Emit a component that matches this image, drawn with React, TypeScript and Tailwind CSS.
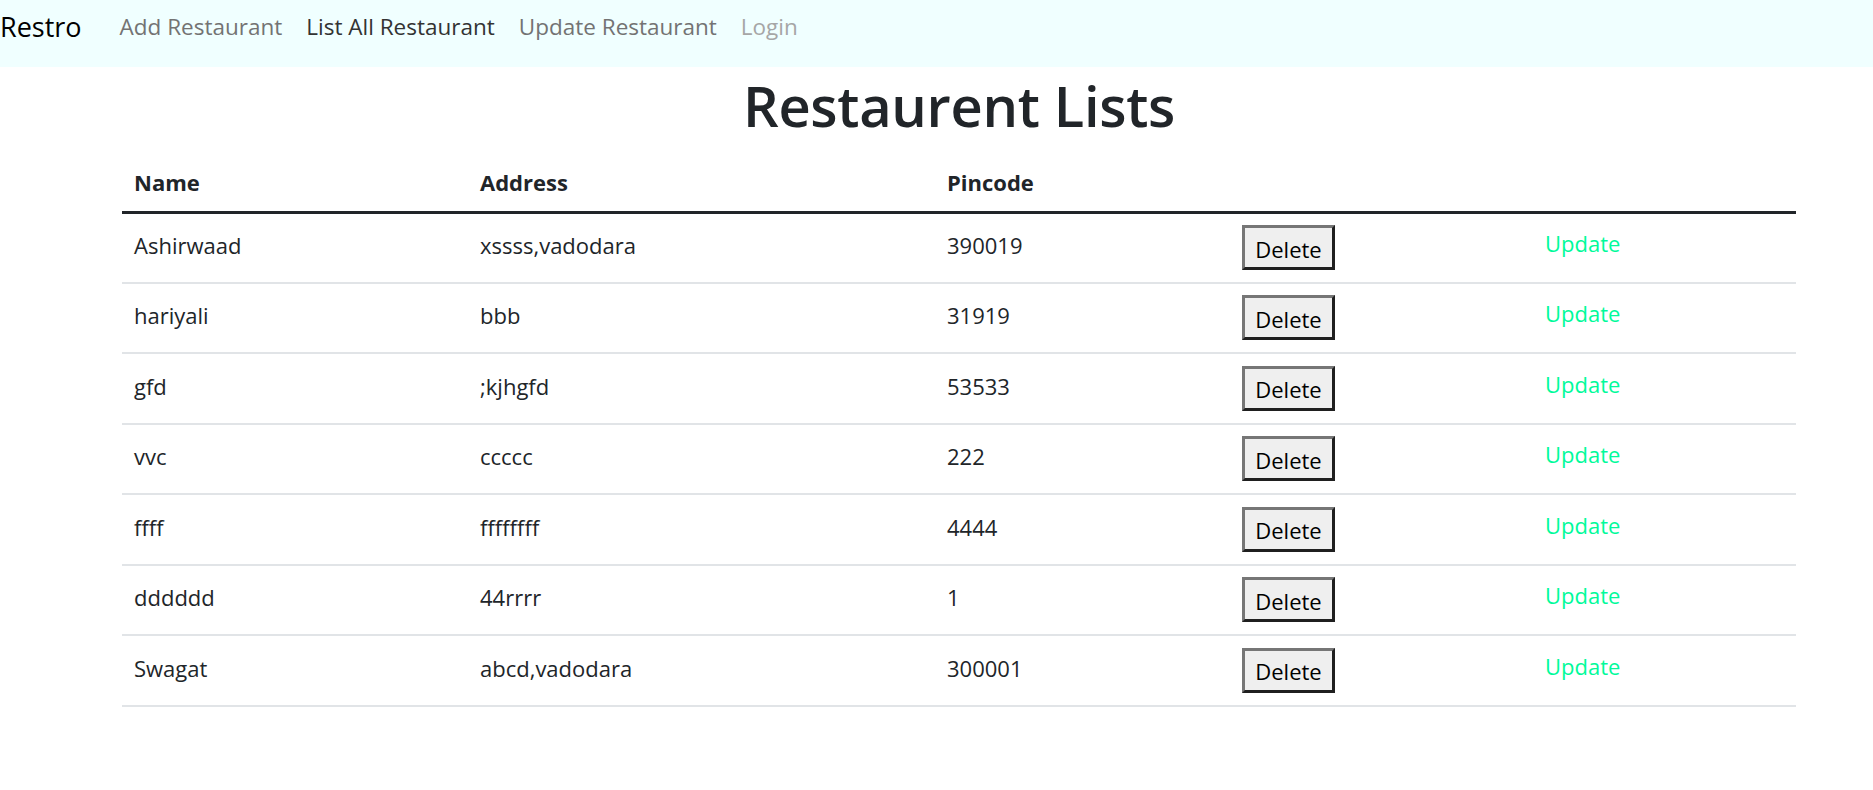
import React from "react"

const ROWS = [
  { name: "Ashirwaad", address: "xssss,vadodara", pincode: "390019" },
  { name: "hariyali", address: "bbb", pincode: "31919" },
  { name: "gfd", address: ";kjhgfd", pincode: "53533" },
  { name: "vvc", address: "ccccc", pincode: "222" },
  { name: "ffff", address: "ffffffff", pincode: "4444" },
  { name: "dddddd", address: "44rrrr", pincode: "1" },
  { name: "Swagat", address: "abcd,vadodara", pincode: "300001" },
]

function NavBar() {
  return (
    <nav className="flex h-[67px] items-start bg-[#f0ffff] pt-[9px]">
      <a href="#" className="mr-[38px] text-[27px] leading-[36px] text-black">
        Restro
      </a>
      <div className="flex gap-[24px] pt-[1px] text-[22.5px] leading-[34px]">
        <a href="#" className="text-[#737373]">
          Add Restaurant
        </a>
        <a href="#" className="text-[#333]">
          List All Restaurant
        </a>
        <a href="#" className="text-[#737373]">
          Update Restaurant
        </a>
        <a href="#" className="text-[#a6a6a6]">
          Login
        </a>
      </div>
    </nav>
  )
}

export default function App() {
  return (
    <div className="min-h-[790px] bg-white font-['Open_Sans',sans-serif] text-[#212529]">
      <NavBar />
      <div className="ml-[122px] w-[1674px]">
        <h1 className="text-center text-[56px] font-semibold leading-[77px] tracking-[-0.3px]">
          Restaurent Lists
        </h1>
        <table className="w-full border-collapse text-[22px]">
          <thead>
            <tr className="h-[68px] border-b-[3px] border-[#212529]">
              <th className="w-[348px] px-[12px] pt-[10px] text-left font-bold">Name</th>
              <th className="w-[467px] px-[10px] pt-[10px] text-left font-bold">Address</th>
              <th className="w-[295px] px-[10px] pt-[10px] text-left font-bold">Pincode</th>
              <th className="w-[303px]"></th>
              <th></th>
            </tr>
          </thead>
          <tbody>
            {ROWS.map((row) => (
              <tr key={row.name} className="h-[70.5px] border-b-2 border-[#e1e4e7]">
                <td className="px-[12px] pb-[4px]">{row.name}</td>
                <td className="px-[10px] pb-[4px]">{row.address}</td>
                <td className="px-[10px] pb-[4px]">{row.pincode}</td>
                <td className="px-[10px]">
                  <button
                    type="button"
                    className="h-[45px] w-[93px] border-[3px] border-t-[#767676] border-l-[#767676] border-r-[#1f1f1f] border-b-[#1f1f1f] bg-[#efefef] pt-[2px] text-[22px] leading-none text-black"
                  >
                    Delete
                  </button>
                </td>
                <td className="px-[10px] pb-[8px]">
                  <a href="#" className="text-[#00fa9a]">
                    Update
                  </a>
                </td>
              </tr>
            ))}
          </tbody>
        </table>
      </div>
    </div>
  )
}
